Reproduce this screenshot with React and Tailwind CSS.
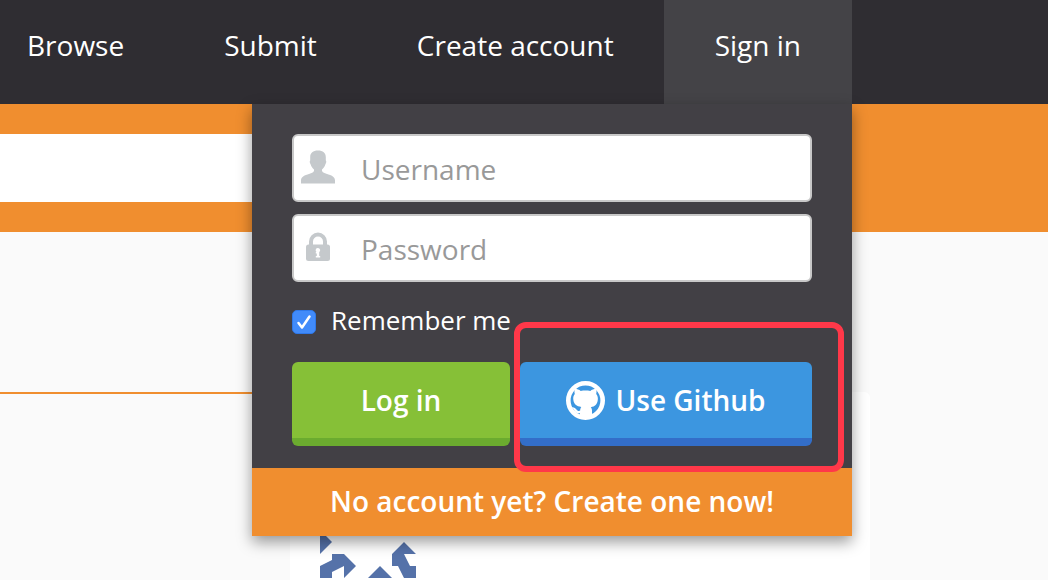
const navLinks = ['Browse', 'Submit', 'Create account'];

function UserIcon() {
  return (
    <svg width="34" height="34" viewBox="0 0 34 34" fill="#c5c9cc" aria-hidden="true">
      <path d="M17 .5c5 0 7.800 2.500 7.800 6.500v3.500c.7.600.6 2.200-.3 3.500-.6 2.600-2.200 4.300-3.500 5.500v1.500c.8 1.700 3.500 2.600 6.500 3.600 4.500 1.400 6.500 3 6.500 6v3H0v-3c0-3 2-4.600 6.500-6 3-1 5.700-1.900 6.500-3.600v-1.500c-1.300-1.200-2.900-2.900-3.500-5.500-.9-1.300-1-2.900-.3-3.500V7C9.200 3 12 .5 17 .5z" />
    </svg>
  );
}

function LockIcon() {
  return (
    <svg width="24" height="30" viewBox="0 0 24 30" aria-hidden="true">
      <path d="M5 14V9.500a7 7 0 0 1 14 0V14" fill="none" stroke="#c5c9cc" strokeWidth="4" />
      <rect y="12.500" width="24" height="16.500" rx="2.500" fill="#c5c9cc" />
      <path d="M12 16a2.200 2.200 0 0 1 1.200 4v4h1v1.500H9.800V24h1v-2.500h-1V20h.8A2.200 2.200 0 0 1 12 16z" fill="#fff" />
    </svg>
  );
}

function GithubIcon() {
  return (
    <svg width="39" height="39" viewBox="0 0 39 39" aria-hidden="true">
      <circle cx="19.500" cy="19.500" r="17.200" fill="none" stroke="#fff" strokeWidth="4.600" />
      <path
        d="M9 7.800c2.200.2 4.200 1 5.700 2.100 3-.6 6.600-.6 9.600 0 1.500-1.100 3.500-1.900 5.700-2.100.7 1.700.7 3.500.2 5.100 1.400 1.700 1.900 3.600 1.600 5.900-.5 4.800-2.800 6.800-7 7.400.8 1 1.200 2 1.200 3.400V37H14v-4.800c-3.600.5-4.900-.9-6-3.100-.6-1.100-1.300-1.800-2.300-2.800 2-.4 3.800.7 4.800 2.200.9 1.400 1.800 1.700 3.600 1.300.1-1.400.4-2.800 1.200-3.800-4.800-.6-7.500-2.600-8-7.400-.3-2.300.2-4.200 1.500-5.700-.6-1.600-.4-3.400.2-5.100z"
        fill="#fff"
      />
    </svg>
  );
}

function Identicon() {
  return (
    <svg width="96" height="96" viewBox="0 0 96 96" fill="#5572a9" aria-hidden="true">
      <path d="M0 48l12 12L0 72z" />
      <path d="M12 72h12l12 12-12 12V84l-12 6v6H0V84l12-6z" />
      <path d="M48 96l12-12 12 12z" />
      <path d="M72 72l12-12 12 12H84l6 12h6v12H84l-6-12h-6z" />
    </svg>
  );
}

function Field({ id, type, label, icon }) {
  return (
    <div className="relative">
      <label htmlFor={id} className="absolute left-2 top-0 flex h-[66px] w-9 items-center justify-center">
        {icon}
      </label>
      <input
        id={id}
        type={type}
        placeholder={label}
        aria-label={label}
        className="block h-[68px] w-full rounded-md border-2 border-[#c8c8c8] bg-white pr-4 pl-[67px] pt-0.5 leading-10 text-[#333] outline-none placeholder:text-[#999]"
      />
    </div>
  );
}

function SignInPanel() {
  return (
    <div className="absolute top-full right-0 w-[600px] bg-[#424045] shadow-[0_6px_14px_rgba(0,0,0,0.4)]">
      <form className="px-10 pt-[30px] pb-[22px]" onSubmit={(e) => e.preventDefault()}>
        <div className="space-y-3">
          <Field id="username" type="text" label="Username" icon={<UserIcon />} />
          <Field id="password" type="password" label="Password" icon={<LockIcon />} />
        </div>

        <label className="mt-[18px] flex h-10 items-center gap-[15px] text-[26px]">
          <span className="relative mt-1 size-6">
            <input
              type="checkbox"
              defaultChecked
              className="peer block size-6 appearance-none rounded-[5px] border border-[#2f78e8] bg-[#418bfa]"
            />
            <svg
              viewBox="0 0 24 24"
              className="pointer-events-none absolute inset-0 hidden size-6 peer-checked:block"
              fill="none"
              stroke="#fff"
              strokeWidth="2.500"
              strokeLinecap="round"
              strokeLinejoin="round"
            >
              <path d="M6.500 13l3.500 4.500L17.500 6.500" />
            </svg>
          </span>
          Remember me
        </label>

        <div className="mt-[22px] flex gap-2.5 font-semibold">
          <button type="submit" className="h-[84px] w-[218px] rounded-md border-b-8 border-[#6bab2f] bg-[#86c037]">
            Log in
          </button>
          <div className="relative flex-1">
            <button
              type="button"
              className="flex h-[84px] w-full items-center justify-center gap-2.5 rounded-md border-b-8 border-[#336ec9] bg-[#3c96e0]"
            >
              <GithubIcon />
              Use Github
            </button>
            {/* highlight frame */}
            <div className="pointer-events-none absolute -top-10 -right-8 -bottom-[26px] -left-1.5 rounded-xl border-6 border-[#ff3849]" />
          </div>
        </div>
      </form>
      <a href="#register" className="block bg-[#f08e2f] pb-0.5 text-center leading-[66px] font-semibold">
        No account yet? Create one now!
      </a>
    </div>
  );
}

export default function App() {
  return (
    <div className="h-screen overflow-hidden bg-[#fafafa] font-['Open_Sans',sans-serif] text-[28px] text-white">
      <header className="relative z-10 bg-[#2f2d32] pr-[196px]">
        <nav className="flex h-[104px] justify-end leading-[90px] whitespace-nowrap">
          {navLinks.map((link) => (
            <a key={link} href="#" className="px-[50px]">
              {link}
            </a>
          ))}
          <div className="relative bg-[#444347]">
            <a href="#signin" className="block px-[51px]">
              Sign in
            </a>
            <div className="leading-9">
              <SignInPanel />
            </div>
          </div>
        </nav>
      </header>

      <div className="bg-[#f08e2f] py-[30px] pr-[236px]">
        <input type="search" aria-label="Search" className="block h-[68px] w-full bg-white px-6 text-[#333] outline-none" />
      </div>

      <main className="pr-[178px]">
        <div className="mr-10 h-[162px] border-b-2 border-[#f08e2f]" />
        <article className="-mt-0.5 ml-[290px] h-60 rounded-md bg-white px-[30px] pt-[90px]">
          <Identicon />
        </article>
      </main>
    </div>
  );
}
